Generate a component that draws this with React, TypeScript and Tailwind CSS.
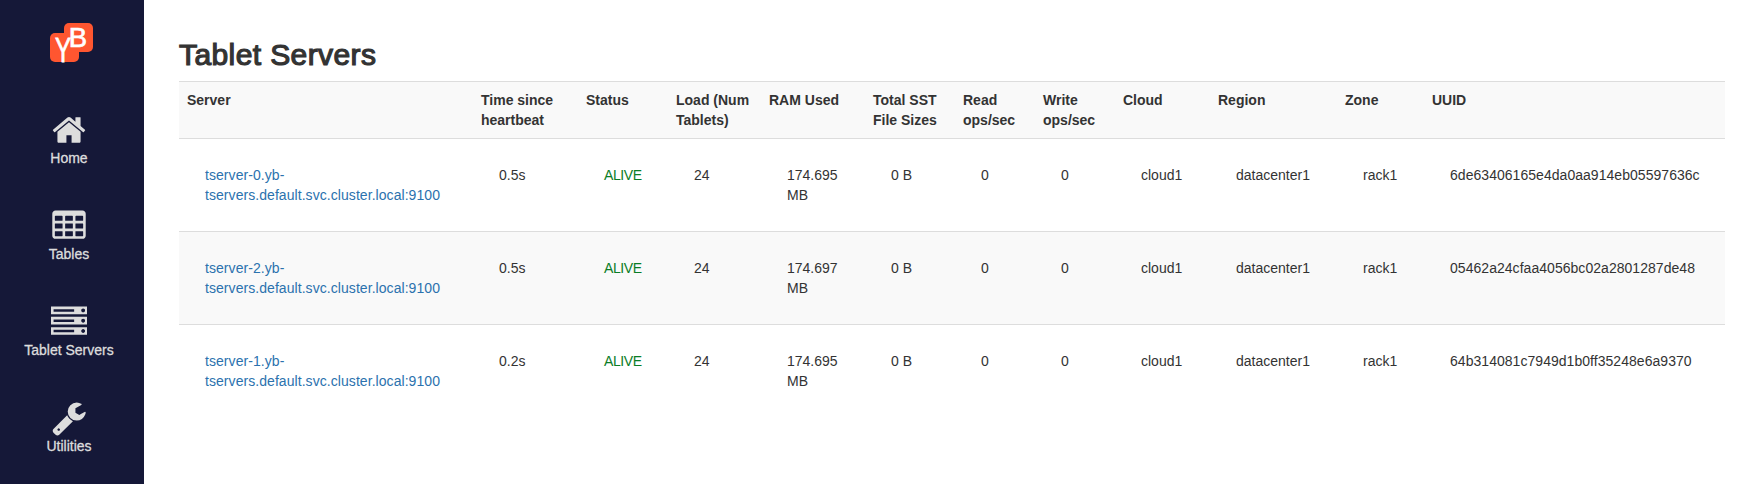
import React from "react";

const HOME =
  "M1472 992v480q0 26-19 45t-45 19h-384v-384h-256v384h-384q-26 0-45-19t-19-45v-480q0-1 .5-3t.5-3l575-474 575 474q1 2 1 6zm223-69l-62 74q-8 9-21 11h-3q-13 0-21-7l-692-577-692 577q-12 8-24 7-13-2-21-11l-62-74q-8-10-7-23.5t11-21.5l719-599q32-26 76-26t76 26l244 204v-195q0-14 9-23t23-9h192q14 0 23 9t9 23v408l219 182q10 8 11 21.5t-7 23.5z";
const CELL = "v-192q0-14-9-23t-23-9h-320q-14 0-23 9t-9 23v192q0 14 9 23t23 9h320q14 0 23-9t9-23z";
const TABLE =
  [576, 1088, 1600]
    .flatMap((x) => [608, 992, 1376].map((y) => `M${x} ${y}${CELL}`))
    .join("") +
  "M1728 288v1088q0 66-47 113t-113 47h-1344q-66 0-113-47t-47-113v-1088q0-66 47-113t113-47h1344q66 0 113 47t47 113z";
const SERVER =
  "M128 1408h1024v-128h-1024v128zm0-512h1024v-128h-1024v128zm1568 448q0-40-28-68t-68-28-68 28-28 68 28 68 68 28 68-28 28-68zm-1568-960h1024v-128h-1024v128zm1568 448q0-40-28-68t-68-28-68 28-28 68 28 68 68 28 68-28 28-68zm0-512q0-40-28-68t-68-28-68 28-28 68 28 68 68 28 68-28 28-68zm96 832v384h-1792v-384h1792zm0-512v384h-1792v-384h1792zm0-512v384h-1792v-384h1792z";
const WRENCH =
  "M448 1472q0-26-19-45t-45-19-45 19-19 45 19 45 45 19 45-19 19-45zm644-420l-682 682q-37 37-90 37-52 0-91-37l-106-108q-38-36-38-90 0-53 38-91l681-681q39 98 114.5 173.5t173.5 114.5zm634-435q0 39-23 106-47 134-164.5 217.5t-258.5 83.5q-185 0-316.5-131.5t-131.5-316.5 131.5-316.5 316.5-131.5q58 0 121.5 16.5t107.5 46.5q16 11 16 28t-16 28l-293 169v224l193 107q5-3 79-48.5t135.5-81 70.5-35.5q15 0 23.5 10t8.5 25z";

const menu = [
  { label: "Home", path: HOME },
  { label: "Tables", path: TABLE },
  { label: "Tablet Servers", path: SERVER },
  { label: "Utilities", path: WRENCH },
];

function Logo() {
  return (
    <svg className="ml-[50px] h-[39px] w-[43px] overflow-visible" viewBox="0 0 43 39" fill="#fff" fontFamily="Liberation Sans, sans-serif">
      <rect x="14" y="0" width="29" height="29" rx="5" fill="#ff5630" />
      <rect x="0" y="10" width="29" height="29" rx="5" fill="#ff5630" />
      <text transform="translate(5 38.7) scale(.7 1)" fontSize="34.5" stroke="#fff" strokeWidth=".8">
        Y
      </text>
      <text x="18.8" y="23.9" fontSize="27.5" stroke="#fff" strokeWidth=".7">
        B
      </text>
    </svg>
  );
}

const columns = [
  { title: "Server", width: "w-[294px]" },
  { title: "Time since heartbeat", width: "w-[105px]" },
  { title: "Status", width: "w-[90px]" },
  { title: "Load (Num Tablets)", width: "w-[93px]" },
  { title: "RAM Used", width: "w-[104px]" },
  { title: "Total SST File Sizes", width: "w-[90px]" },
  { title: "Read ops/sec", width: "w-[80px]" },
  { title: "Write ops/sec", width: "w-[80px]" },
  { title: "Cloud", width: "w-[95px]" },
  { title: "Region", width: "w-[127px]" },
  { title: "Zone", width: "w-[87px]" },
  { title: "UUID", width: "w-[301px]" },
];

const servers = [
  { id: 0, beat: "0.5s", ram: "174.695", uuid: "6de63406165e4da0aa914eb05597636c" },
  { id: 2, beat: "0.5s", ram: "174.697", uuid: "05462a24cfaa4056bc02a2801287de48" },
  { id: 1, beat: "0.2s", ram: "174.695", uuid: "64b314081c7949d1b0ff35248e6a9370" },
];

function Cell({ children }: { children: React.ReactNode }) {
  return <td className="border-t border-[#ddd] py-[26px] pl-[26px] pr-0 align-top">{children}</td>;
}

export default function App() {
  return (
    <div className="flex h-[484px] bg-white font-['Liberation_Sans',Arial,sans-serif] text-sm leading-5 text-[#333]">
      <nav className="w-36 shrink-0 bg-[#151838] pt-[23px] text-[#ddd]">
        <Logo />
        <ul className="mt-[50px] flex w-[138px] flex-col gap-10">
          {menu.map((m) => (
            <li key={m.label} className="flex flex-col items-center">
              <svg className="size-9" viewBox="0 0 1792 1792" fill="currentColor" fillRule="evenodd">
                <path d={m.path} />
              </svg>
              <span className="[-webkit-text-stroke:0.3px_#ddd]">{m.label}</span>
            </li>
          ))}
        </ul>
      </nav>
      <main className="pl-[35px] pt-[38px]">
        <h2 className="mb-[10px] text-[30px] font-normal leading-[33px] tracking-[0.4px] [-webkit-text-stroke:1.2px_#333]">
          Tablet Servers
        </h2>
        <table className="w-[1546px] table-fixed border-collapse">
          <thead>
            <tr className="bg-[#f9f9f9]">
              {columns.map((c) => (
                <th key={c.title} className={`${c.width} border-t border-[#ddd] p-2 text-left align-top font-bold`}>
                  {c.title}
                </th>
              ))}
            </tr>
          </thead>
          <tbody>
            {servers.map((s) => (
              <tr key={s.id} className="even:bg-[#f9f9f9]">
                <Cell>
                  <a className="tracking-[0.06px] text-[#2b72ae]">
                    tserver-{s.id}.yb-
                    <br />
                    tservers.default.svc.cluster.local:9100
                  </a>
                </Cell>
                <Cell>{s.beat}</Cell>
                <Cell>
                  <span className="tracking-[-0.4px] text-[#0a7d26]">ALIVE</span>
                </Cell>
                <Cell>24</Cell>
                <Cell>
                  {s.ram}
                  <br />
                  MB
                </Cell>
                <Cell>0 B</Cell>
                <Cell>0</Cell>
                <Cell>0</Cell>
                <Cell>cloud1</Cell>
                <Cell>datacenter1</Cell>
                <Cell>rack1</Cell>
                <Cell>
                  <span className="tracking-[0.04px]">{s.uuid}</span>
                </Cell>
              </tr>
            ))}
          </tbody>
        </table>
      </main>
    </div>
  );
}
